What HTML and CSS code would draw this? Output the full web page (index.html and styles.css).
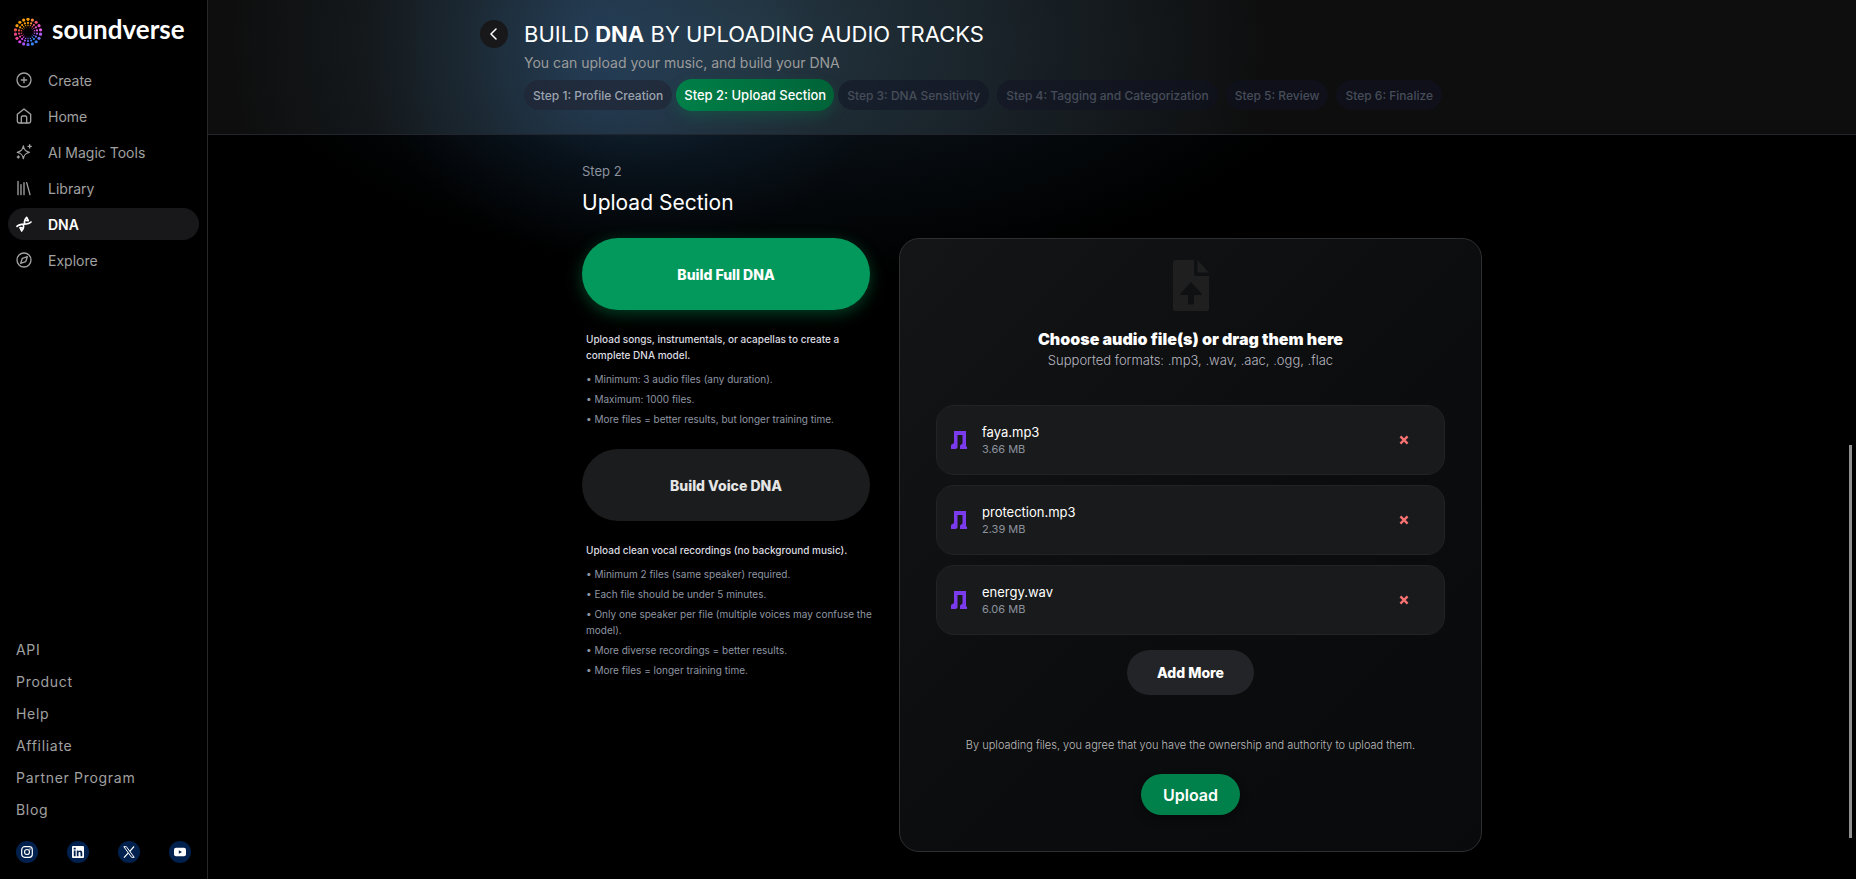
FILE: index.html
```html
<!DOCTYPE html>
<html lang="en">

<head>
    <meta charset="UTF-8">
    <meta name="viewport" content="width=device-width, initial-scale=1.0">
    <title>Soundverse - Build DNA</title>
    <link rel="stylesheet" href="styles.css">
</head>

<body>
    <!-- sidebar -->
    <aside class="sidebar">
        <a class="brand" href="#">
            <svg class="brand-logo" id="logo" viewBox="-14 -14 28 28"></svg>
            <span class="brand-name">soundverse</span>
        </a>
        <nav class="nav">
            <a class="nav-item" href="#">
                <svg class="icon" viewBox="0 0 24 24"><circle cx="12" cy="12" r="10.5"/><path d="M12 8v8M8 12h8"/></svg>
                Create
            </a>
            <a class="nav-item" href="#">
                <svg class="icon" viewBox="0 0 24 24"><path d="M2 9.5 12 1.5l10 8V20a2.5 2.5 0 0 1-2.5 2.5h-15A2.5 2.5 0 0 1 2 20z"/><path d="M8 22.5V14a2 2 0 0 1 2-2h4a2 2 0 0 1 2 2v8.5"/></svg>
                Home
            </a>
            <a class="nav-item" href="#">
                <svg class="icon" viewBox="0 0 24 24"><path d="M11 3c1 6 3 8 9 9.5-6 1.5-8 3.5-9 9.5-1-6-3-8-9-9.5 6-1.5 8-3.5 9-9.5z"/><path d="M20.5 1v5M18 3.5h5M3.5 18v3M2 19.5h3"/></svg>
                AI Magic Tools
            </a>
            <a class="nav-item" href="#">
                <svg class="icon" viewBox="0 0 24 24"><path d="M3 2v20M7.5 7v15M12 4v18M16 4l5 18"/></svg>
                Library
            </a>
            <a class="nav-item active" href="#">
                <svg class="icon dna" viewBox="0 0 24 24"><path d="M1.500 15.500C7 10 17 14.500 22.500 9"/><path d="M13 11C12 8 13.500 4.500 16 2l2.500 5-4-.5M11 13.500c1 3.500 0 6.500-2.500 9L6 17.500l4.500.5"/></svg>
                DNA
            </a>
            <a class="nav-item" href="#">
                <svg class="icon" viewBox="0 0 24 24"><circle cx="12" cy="12" r="10.5"/><path d="m17 7-2.5 7.5L7 17l2.500-7.500z"/></svg>
                Explore
            </a>
        </nav>
        <nav class="links">
            <a href="#">API</a>
            <a href="#">Product</a>
            <a href="#">Help</a>
            <a href="#">Affiliate</a>
            <a href="#">Partner Program</a>
            <a href="#">Blog</a>
        </nav>
        <div class="social">
            <a href="#" aria-label="Instagram">
                <svg viewBox="0 0 12 12"><rect x=".7" y=".7" width="10.6" height="10.6" rx="3" fill="none" stroke="#fff" stroke-width="1.2"/><circle cx="6" cy="6" r="2.5" fill="none" stroke="#fff" stroke-width="1.2"/><circle cx="9" cy="3" r=".7" fill="#fff"/></svg>
            </a>
            <a href="#" aria-label="LinkedIn">
                <svg viewBox="0 0 12 12"><rect width="12" height="12" rx="1" fill="#fff"/><path d="M1.800 4.600h1.800v5.700H1.800zM1.700 1.800h2v1.700h-2zM4.800 4.600h1.700v.8c.9-1.400 3.800-1.300 3.800 1.400v3.500H8.500V7.200c0-1.600-2-1.500-2 0v3.100H4.800z" fill="#00204d"/></svg>
            </a>
            <a href="#" aria-label="X">
                <svg viewBox="0 0 12 12"><path d="M.8.7h2.600l7.800 10.600H8.600z" fill="none" stroke="#fff" stroke-width="1"/><path d="M11 .5 6.800 5.300M5.300 6.900 1 11.600" stroke="#fff" stroke-width="1.2"/></svg>
            </a>
            <a href="#" aria-label="YouTube">
                <svg viewBox="0 0 12 12"><rect y="1.700" width="12" height="8.600" rx="2" fill="#fff"/><path d="M4.800 4.200v3.600L8 6z" fill="#00204d"/></svg>
            </a>
        </div>
    </aside>

    <main class="main">
        <header class="header">
            <button class="back" type="button" aria-label="Back">
                <svg viewBox="0 0 12 12"><path d="M8 1 3 6l5 5"/></svg>
            </button>
            <div class="header-text">
                <h1>BUILD <b>DNA</b> BY UPLOADING AUDIO TRACKS</h1>
                <p class="subtitle">You can upload your music, and build your DNA</p>
                <div class="steps">
                    <button type="button" class="step done">Step 1: Profile Creation</button>
                    <button type="button" class="step current">Step 2: Upload Section</button>
                    <button type="button" class="step">Step 3: DNA Sensitivity</button>
                    <button type="button" class="step">Step 4: Tagging and Categorization</button>
                    <button type="button" class="step">Step 5: Review</button>
                    <button type="button" class="step">Step 6: Finalize</button>
                </div>
            </div>
        </header>

        <section class="content">
            <p class="step-label">Step 2</p>
            <h2>Upload Section</h2>
            <div class="columns">
                <div class="modes">
                    <button type="button" class="mode selected">Build Full DNA</button>
                    <div class="mode-info">
                        <strong>Upload songs, instrumentals, or acapellas to create a complete DNA model.</strong>
                        <ul>
                            <li>Minimum: 3 audio files (any duration).</li>
                            <li>Maximum: 1000 files.</li>
                            <li>More files = better results, but longer training time.</li>
                        </ul>
                    </div>
                    <button type="button" class="mode">Build Voice DNA</button>
                    <div class="mode-info">
                        <strong>Upload clean vocal recordings (no background music).</strong>
                        <ul>
                            <li>Minimum 2 files (same speaker) required.</li>
                            <li>Each file should be under 5 minutes.</li>
                            <li>Only one speaker per file (multiple voices may confuse the model).</li>
                            <li>More diverse recordings = better results.</li>
                            <li>More files = longer training time.</li>
                        </ul>
                    </div>
                </div>

                <div class="dropzone">
                    <svg class="file-icon" viewBox="0 0 36 51"><path fill-rule="evenodd" d="M2 0h19v14a2 2 0 0 0 2 2h13v33a2 2 0 0 1-2 2H2a2 2 0 0 1-2-2V2a2 2 0 0 1 2-2zM18 22 7.500 33.500q-.8 1.500 1 1.500H15v8q0 1.500 1.500 1.500h3Q21 44.500 21 43v-8h6.500q1.800 0 1-1.500z"/><path d="M24.500 0 36 12.500H26a1.500 1.500 0 0 1-1.500-1.500z"/></svg>
                    <h3>Choose audio file(s) or drag them here</h3>
                    <p class="formats">Supported formats: .mp3, .wav, .aac, .ogg, .flac</p>
                    <ul class="files">
                        <li class="file">
                            <svg class="note" viewBox="0 0 16 18"><path d="M3 0h12v15.500h1V18H9v-3.500l2.500-2V4H6.500v12.500L5 18H0v-4l3-2z"/></svg>
                            <div class="file-text"><span class="file-name">faya.mp3</span><span class="file-size">3.66 MB</span></div>
                            <button type="button" class="remove" aria-label="Remove faya.mp3"><svg viewBox="0 0 10 10"><path d="m2 2 6 6M8 2 2 8"/></svg></button>
                        </li>
                        <li class="file">
                            <svg class="note" viewBox="0 0 16 18"><path d="M3 0h12v15.500h1V18H9v-3.500l2.500-2V4H6.500v12.500L5 18H0v-4l3-2z"/></svg>
                            <div class="file-text"><span class="file-name">protection.mp3</span><span class="file-size">2.39 MB</span></div>
                            <button type="button" class="remove" aria-label="Remove protection.mp3"><svg viewBox="0 0 10 10"><path d="m2 2 6 6M8 2 2 8"/></svg></button>
                        </li>
                        <li class="file">
                            <svg class="note" viewBox="0 0 16 18"><path d="M3 0h12v15.500h1V18H9v-3.500l2.500-2V4H6.500v12.500L5 18H0v-4l3-2z"/></svg>
                            <div class="file-text"><span class="file-name">energy.wav</span><span class="file-size">6.06 MB</span></div>
                            <button type="button" class="remove" aria-label="Remove energy.wav"><svg viewBox="0 0 10 10"><path d="m2 2 6 6M8 2 2 8"/></svg></button>
                        </li>
                    </ul>
                    <button type="button" class="add-more">Add More</button>
                    <p class="agree">By uploading files, you agree that you have the ownership and authority to upload them.</p>
                    <button type="button" class="upload">Upload</button>
                </div>
            </div>
        </section>
        <div class="scrollbar"></div>
    </main>
    <script src="logo.js"></script>
</body>

</html>
```
FILE: styles.css
```css
* {
    box-sizing: border-box;
}

body,
h1,
h2,
h3,
p,
ul {
    margin: 0;
    padding: 0;
}

body {
    display: flex;
    min-height: 100vh;
    background: #000;
    color: #fff;
    font-family: Inter, "Liberation Sans", sans-serif;
    font-size: 14px;
}

a {
    color: inherit;
    text-decoration: none;
}

ul {
    list-style: none;
}

button {
    border: 0;
    color: inherit;
    font-family: inherit;
    cursor: pointer;
}

/* sidebar */
.sidebar {
    display: flex;
    flex-direction: column;
    flex: none;
    width: 208px;
    padding: 16px 8px;
    border-right: 1px solid #27272a;
}

.brand {
    display: flex;
    align-items: center;
    gap: 10px;
    height: 32px;
    padding-left: 6px;
}

.brand-logo {
    width: 28px;
    height: 28px;
}

.brand-name {
    padding-bottom: 6px;
    font-family: Lato, sans-serif;
    font-size: 26px;
    font-weight: 700;
    line-height: 26px;
}

.nav {
    display: flex;
    flex-direction: column;
    gap: 4px;
    padding-top: 16px;
}

.nav-item {
    display: flex;
    align-items: center;
    gap: 16px;
    height: 32px;
    padding: 0 8px;
    border-radius: 16px;
    color: #a1a1a1;
}

.nav-item.active {
    background: #18181b;
    color: #fff;
    font-weight: 600;
}

.icon {
    width: 16px;
    height: 16px;
    fill: none;
    stroke: currentColor;
    stroke-width: 2;
    stroke-linecap: round;
    stroke-linejoin: round;
}

.icon.dna {
    stroke-width: 2.5;
}

.links {
    display: flex;
    flex-direction: column;
    gap: 12px;
    margin-top: auto;
    padding-left: 8px;
    color: #a1a1a1;
    line-height: 20px;
    letter-spacing: 0.05em;
}

.social {
    display: flex;
    justify-content: space-between;
    padding: 21px 8px 0;
}

.social a {
    display: grid;
    place-items: center;
    width: 22px;
    height: 22px;
    border-radius: 50%;
    background: #00204d;
}

.social svg {
    width: 12px;
    height: 12px;
}

/* main area */
.main {
    position: relative;
    flex: 1;
    min-width: 0;
    background:
        radial-gradient(ellipse 280px 260px at 420px 0, rgba(45, 100, 140, .55), rgba(30, 70, 110, .14) 65%, transparent),
        radial-gradient(ellipse 560px 280px at 580px 0, rgba(30, 55, 75, .5), transparent);
}

.header {
    display: flex;
    justify-content: center;
    gap: 16px;
    padding: 20px 142px 23px 0;
    border-bottom: 1px solid #22242e;
    background:
        radial-gradient(ellipse 230px 280px at 390px 50px, rgba(45, 85, 130, .45), rgba(45, 85, 120, .15) 60%, transparent),
        radial-gradient(ellipse 520px 380px at 540px 40px, rgba(50, 80, 100, .6), transparent),
        #0e0e0e;
}

.back {
    display: grid;
    place-items: center;
    width: 28px;
    height: 28px;
    padding: 0;
    border-radius: 50%;
    background: #18181a;
}

.back svg {
    width: 12px;
    height: 12px;
    fill: none;
    stroke: #fff;
    stroke-width: 1.5;
    stroke-linecap: round;
    stroke-linejoin: round;
}

h1 {
    font-size: 22px;
    font-weight: 400;
    line-height: 28px;
}

.subtitle {
    padding-top: 5px;
    color: #9b9b9b;
    line-height: 20px;
}

.steps {
    display: flex;
    align-items: center;
    gap: 8px;
    padding-top: 6px;
}

.step {
    height: 30px;
    padding: 0 9px;
    border-radius: 15px;
    background: rgba(15, 18, 36, .5);
    color: #464d59;
    font-size: 12px;
    font-weight: 500;
    white-space: nowrap;
}

.step.done {
    background: rgba(31, 35, 50, .6);
    color: #9ca3af;
}

.step.current {
    height: 32px;
    margin: 0 -4px;
    padding: 0 8px;
    border-radius: 16px;
    background: linear-gradient(90deg, #008048, #006338);
    box-shadow: 0 6px 14px rgba(0, 140, 80, .25);
    color: #fff;
    font-size: 13px;
}

.content {
    max-width: 900px;
    margin: 0 auto;
    padding: 26px 0;
}

.step-label {
    color: #8b929e;
    font-size: 13px;
    line-height: 20px;
}

h2 {
    padding: 8px 0 21px;
    font-size: 21px;
    font-weight: 400;
    line-height: 28px;
}

.columns {
    display: grid;
    grid-template-columns: 288px 1fr;
    gap: 29px;
}

.mode {
    display: block;
    width: 100%;
    height: 72px;
    border-radius: 36px;
    background: #1b1c1d;
    color: #e5e5e5;
    font-size: 14px;
    font-weight: 800;
}

.mode.selected {
    background: #03995c;
    box-shadow: 0 4px 16px rgba(0, 160, 90, .4);
    color: #fff;
}

.mode-info {
    margin-right: -8px;
    padding: 21px 0 22px 4px;
    color: #8f96a3;
    font-size: 10px;
    line-height: 16px;
}

.mode-info strong {
    display: block;
    color: #dcdce0;
    font-weight: 500;
}

.mode-info ul {
    display: grid;
    gap: 4px;
    padding-top: 8px;
}

.mode-info li::before {
    content: "• ";
}

/* upload panel */
.dropzone {
    display: flex;
    flex-direction: column;
    align-items: center;
    padding: 21px 36px 36px;
    border: 1px solid #2e2f30;
    border-radius: 20px;
    background: linear-gradient(135deg, #141517, #0c0d0f 50%, #090a0c);
}

.file-icon {
    width: 36px;
    height: 51px;
    fill: #1f1f1f;
}

h3 {
    padding-top: 16px;
    font-size: 16px;
    font-weight: 900;
    line-height: 24px;
}

.formats {
    color: #b8b8c0;
    font-size: 13px;
    font-weight: 300;
    line-height: 18px;
}

.files {
    display: grid;
    gap: 10px;
    width: 100%;
    padding: 36px 0 15px;
}

.file {
    display: flex;
    align-items: center;
    height: 70px;
    padding: 0 34px 0 14px;
    border: 1px solid #222325;
    border-radius: 18px;
    background: #191a1b;
}

.note {
    width: 16px;
    height: 18px;
    fill: #7c3aed;
}

.file-text {
    display: grid;
    flex: 1;
    padding-left: 15px;
}

.file-name {
    font-size: 13px;
    line-height: 18px;
}

.file-size {
    color: #8b929e;
    font-size: 11px;
    line-height: 16px;
}

.remove {
    width: 12px;
    height: 12px;
    padding: 0;
    background: none;
}

.remove svg {
    display: block;
    width: 12px;
    height: 12px;
    fill: none;
    stroke: #f87171;
    stroke-width: 2;
}

.add-more {
    height: 45px;
    padding: 0 30px;
    border-radius: 23px;
    background: #232427;
    font-size: 14px;
    font-weight: 800;
}

.agree {
    padding: 41px 0 20px;
    color: #bcbcbc;
    font-size: 11px;
    font-weight: 300;
    line-height: 18px;
}

.upload {
    height: 41px;
    padding: 0 22px;
    border-radius: 21px;
    background: #00804a;
    box-shadow: 0 4px 8px rgba(0, 0, 0, .4);
    font-size: 16px;
    font-weight: 600;
}

.scrollbar {
    position: absolute;
    right: 4px;
    top: 445px;
    width: 3px;
    height: 393px;
    background: #8f8f8f;
}
```
FILE: logo.js
```javascript
// rings of dots, coloured from orange at the top to blue at the bottom
var logo = document.querySelector('#logo');
var rings = [[12.7, 1.6], [9.1, 1.1], [6.8, .7], [5.2, .4]];
var colors = ['#f59e0b', '#fb8a3c', '#f0527a', '#e94ec0', '#e25bea', '#b45cf6', '#6e6cf6', '#3b82f6', '#3b82f6', '#6366f1', '#a855f7', '#d946ef', '#ec4899', '#e8467c', '#ee5a4a', '#f59e0b', '#f59e0b', '#f59e0b'];
rings.forEach(function(ring) {
    for (var i = 0; i < 18; i++) {
        var a = i * Math.PI / 9;
        var dot = document.createElementNS('http://www.w3.org/2000/svg', 'circle');
        dot.setAttribute('cx', ring[0] * Math.sin(a));
        dot.setAttribute('cy', -ring[0] * Math.cos(a));
        dot.setAttribute('r', ring[1]);
        dot.setAttribute('fill', colors[i]);
        logo.appendChild(dot);
    }
})
```
